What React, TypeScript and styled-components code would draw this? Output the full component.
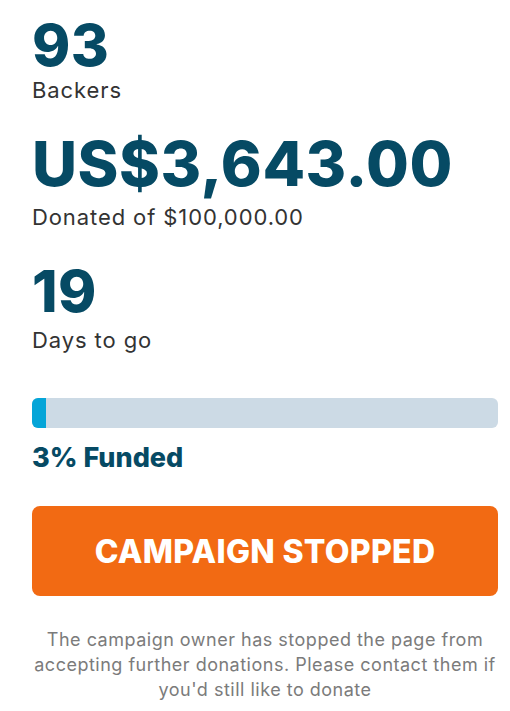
import styled, { createGlobalStyle } from 'styled-components';

const GlobalStyle = createGlobalStyle`
  html, body { margin: 0; padding: 0; background: #fff; }
  body { font-family: Inter, "Noto Sans", sans-serif; -webkit-font-smoothing: antialiased; }
  * { box-sizing: border-box; }
`;

const Panel = styled.div`
  width: 510px; padding: 16px 12px 0 32px;
  display: flex; flex-direction: column;
`;
const Stat = styled.div<{ $gap: number }>`
  display: flex; flex-direction: column; margin-bottom: ${p => p.$gap}px;
`;
const BigNumber = styled.div<{ $size?: number }>`
  font-size: ${p => p.$size ?? 58}px; font-weight: 800; line-height: 1; color: #064a64;
  letter-spacing: 0.5px;
`;
const Label = styled.div<{ $top?: number }>`
  font-size: 22px; color: #333; line-height: 26px; margin-top: ${p => p.$top ?? 3}px;
  letter-spacing: 0.9px;
`;
const Track = styled.div`
  height: 30px; border-radius: 6px; background: #ccdae5; overflow: hidden;
`;
const Fill = styled.div`
  height: 100%; background: #05a5d8;
`;
const Funded = styled.div`
  font-size: 27px; font-weight: 800; color: #064a64; margin-top: 14px; line-height: 32px;
`;
const StoppedButton = styled.button`
  margin-top: 32px; height: 90px; width: 100%; border: none; border-radius: 8px;
  background: #f26a13; color: #fff; font-family: inherit; font-size: 32px; font-weight: 800;
  letter-spacing: 0.3px; cursor: not-allowed;
`;
const Notice = styled.p`
  margin: 31px 0 0; text-align: center; color: #7b7b7b; font-size: 18px; line-height: 25px;
  letter-spacing: 0.5px;
`;

const funded = 3;

export default function App() {
  return (
    <>
      <GlobalStyle />
      <Panel>
        <Stat $gap={30}>
          <BigNumber>93</BigNumber>
          <Label>Backers</Label>
        </Stat>
        <Stat $gap={32}>
          <BigNumber $size={62}>US$3,643.00</BigNumber>
          <Label $top={9}>Donated of $100,000.00</Label>
        </Stat>
        <Stat $gap={45}>
          <BigNumber>19</BigNumber>
          <Label $top={7}>Days to go</Label>
        </Stat>
        <Track>
          <Fill style={{ width: `${funded}%` }} />
        </Track>
        <Funded>{funded}% Funded</Funded>
        <StoppedButton>CAMPAIGN STOPPED</StoppedButton>
        <Notice>
          The campaign owner has stopped the page from accepting further donations. Please contact them if you'd still like to donate
        </Notice>
      </Panel>
    </>
  );
}
